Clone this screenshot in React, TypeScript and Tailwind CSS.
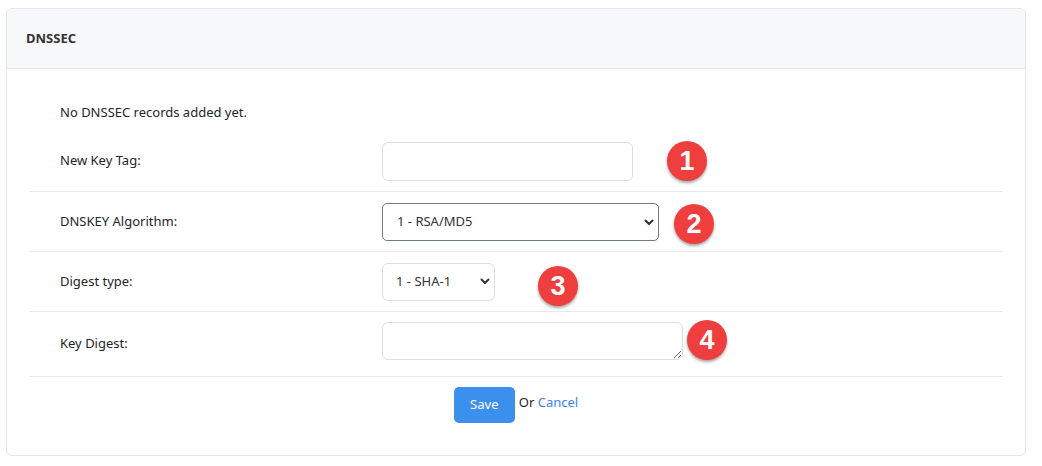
import React from 'react';

const Badge = ({ n, className }: { n: number; className: string }) => (
  <span
    className={`absolute flex h-[40px] w-[40px] items-center justify-center rounded-full bg-[#ee3e3e] text-[27px] font-bold leading-none text-white shadow-[0_2px_3px_rgba(0,0,0,0.35)] ${className}`}
    style={{ fontFamily: '"Liberation Sans", Arial, sans-serif' }}
  >
    {n}
  </span>
);

const Chevron = ({ className }: { className: string }) => (
  <svg className={className} width="10" height="7" viewBox="0 0 10 7" fill="none">
    <path d="M1.5 1.5 L5 5 L8.5 1.5" stroke="#333" strokeWidth="2" strokeLinecap="round" strokeLinejoin="round" />
  </svg>
);

export default function App() {
  return (
    <div className="w-[1042px] h-[466px] bg-white pl-[6px] pt-[8px] text-[13px] text-[#212529]" style={{ fontFamily: '"Noto Sans", "Open Sans", sans-serif' }}>
      <div className="w-[1020px] h-[448px] rounded-[6px] border border-[#e3e5e8] bg-white overflow-hidden">
        {/* Header */}
        <div className="h-[60px] flex items-center px-[19px] bg-[#f7f8fa] border-b border-[#e3e5e8]">
          <span className="font-bold text-[#333]">DNSSEC</span>
        </div>

        {/* Body */}
        <div className="px-[22px] pt-[33px]">
          <p className="pl-[31px] leading-[20px]">No DNSSEC records added yet.</p>

          <div className="mt-[9px]">
            {/* Row 1 */}
            <div className="relative flex items-center h-[61px] border-b border-[#e8e8e8]">
              <div className="w-[353px] pl-[31px]">New Key Tag:</div>
              <input className="h-[39px] w-[251px] rounded-[6px] border border-[#dcdee2] px-3 outline-none" />
              <Badge n={1} className="left-[638px] top-[10px]" />
            </div>

            {/* Row 2 */}
            <div className="relative flex items-center h-[60px] border-b border-[#e8e8e8]">
              <div className="w-[353px] pl-[31px]">DNSKEY Algorithm:</div>
              <div className="relative">
                <select className="appearance-none h-[38px] w-[277px] rounded-[5px] border border-[#6c7a8f] bg-white pl-[14px] text-[13px] text-[#333] outline-none">
                  <option>1 - RSA/MD5</option>
                </select>
                <Chevron className="pointer-events-none absolute right-[5px] top-[16px]" />
              </div>
              <Badge n={2} className="left-[645px] top-[12px]" />
            </div>

            {/* Row 3 */}
            <div className="relative flex items-center h-[60px] border-b border-[#e8e8e8]">
              <div className="w-[353px] pl-[31px]">Digest type:</div>
              <div className="relative">
                <select className="appearance-none h-[38px] w-[113px] rounded-[6px] border border-[#dcdee2] bg-white pl-[13px] text-[13px] text-[#333] outline-none">
                  <option>1 - SHA-1</option>
                </select>
                <Chevron className="pointer-events-none absolute right-[5px] top-[15px]" />
              </div>
              <Badge n={3} className="left-[509px] top-[14px]" />
            </div>

            {/* Row 4 */}
            <div className="relative flex items-center h-[65px] border-b border-[#e8e8e8]">
              <div className="w-[353px] pl-[31px]">Key Digest:</div>
              <textarea className="block self-start mt-[10px] h-[38px] w-[301px] rounded-[6px] border border-[#dcdee2] px-3 outline-none" />
              <Badge n={4} className="left-[658px] top-[8px]" />
            </div>
          </div>

          {/* Actions */}
          <div className="flex items-center justify-center pt-[10px]">
            <button className="h-[36px] w-[61px] rounded-[5px] bg-[#3b90ee] text-white">Save</button>
            <span className="ml-[4px] -mt-[4px]">
              Or <a className="text-[#3b82f6] cursor-pointer">Cancel</a>
            </span>
          </div>
        </div>
      </div>
    </div>
  );
}
